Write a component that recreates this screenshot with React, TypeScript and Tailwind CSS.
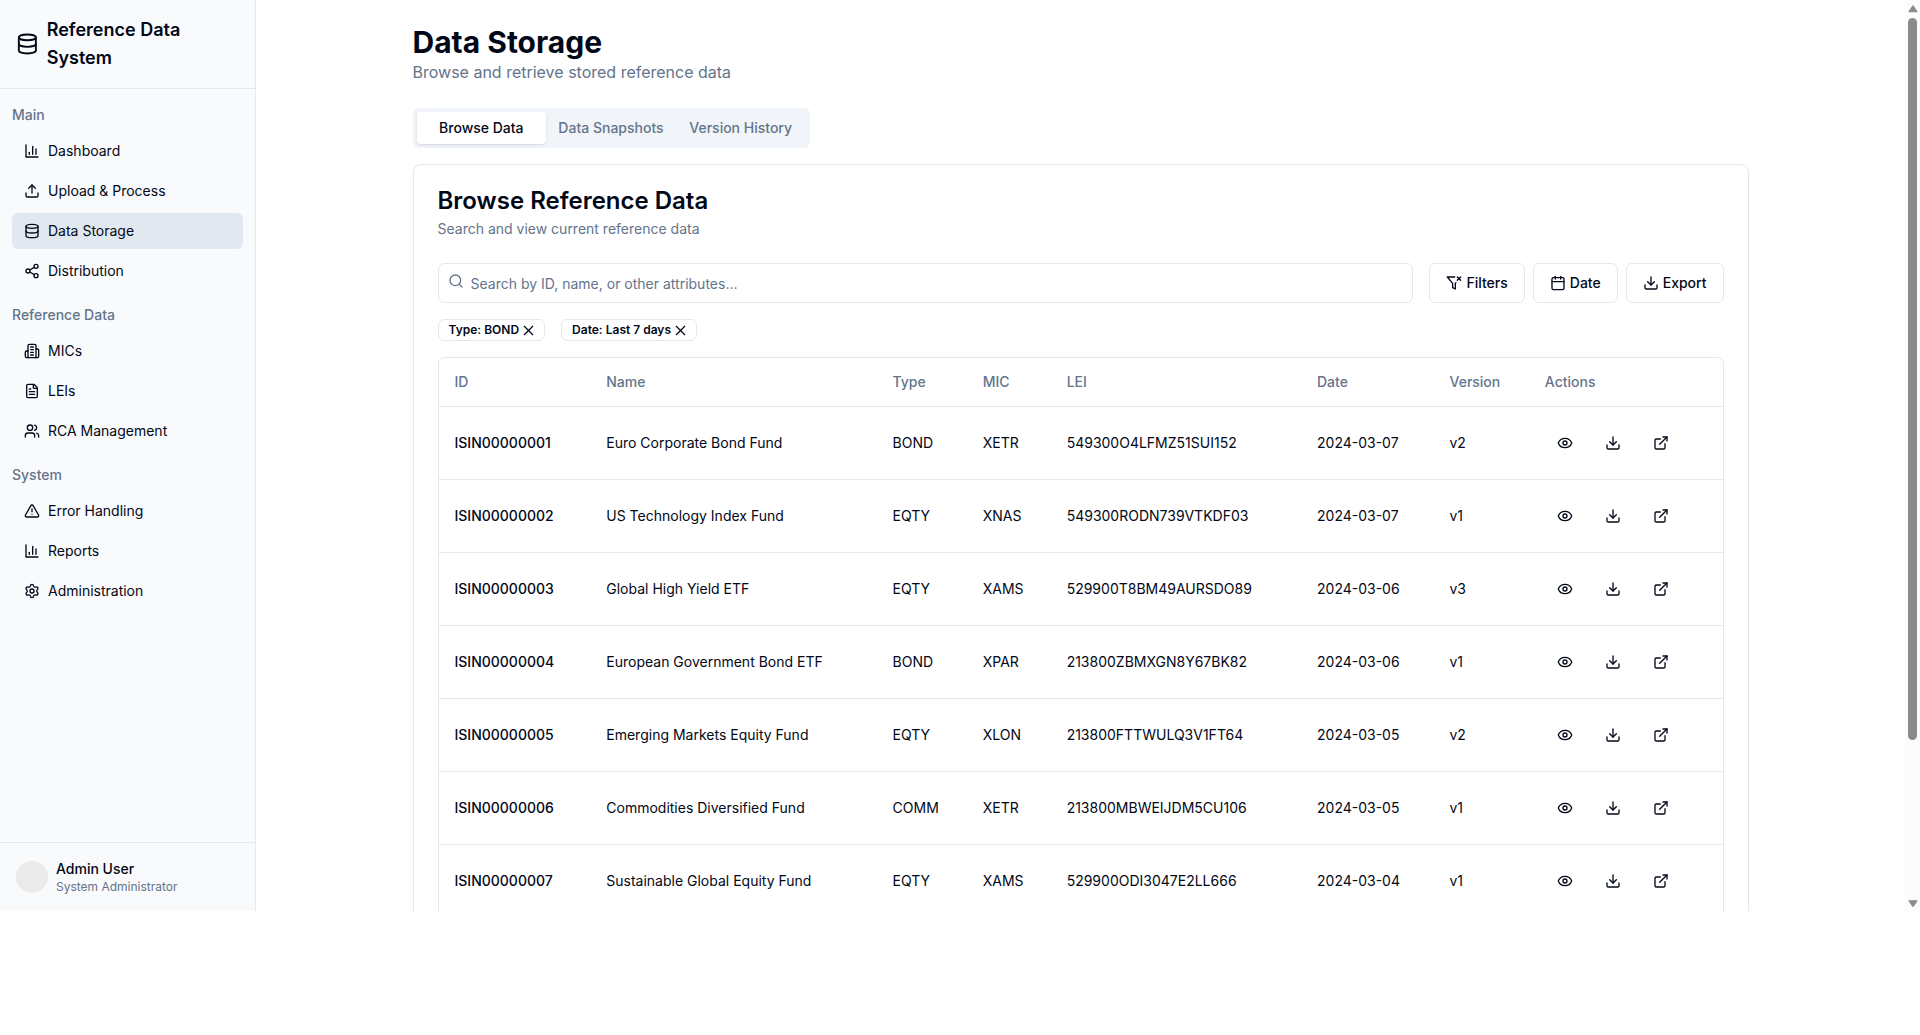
import { useState } from "react";
import type { ComponentType } from "react";
import {
  Calendar,
  Database,
  Download,
  ExternalLink,
  Eye,
  FileText,
  Settings,
  Share2,
  TriangleAlert,
  Upload,
  Users,
} from "lucide-react";

type IconType = ComponentType<{ className?: string }>;

function BarChartIcon({ className }: { className?: string }) {
  return (
    <svg viewBox="0 0 24 24" fill="none" stroke="currentColor" strokeWidth="2" strokeLinecap="round" strokeLinejoin="round" className={className} aria-hidden="true">
      <path d="M3 3v18h18" />
      <path d="M13 17V5" />
      <path d="M18 17V9" />
      <path d="M8 17v-3" />
    </svg>
  );
}

function BuildingIcon({ className }: { className?: string }) {
  return (
    <svg viewBox="0 0 24 24" fill="none" stroke="currentColor" strokeWidth="2" strokeLinecap="round" strokeLinejoin="round" className={className} aria-hidden="true">
      <path d="M6 22V4a2 2 0 0 1 2-2h8a2 2 0 0 1 2 2v18Z" />
      <path d="M6 12H4a2 2 0 0 0-2 2v6a2 2 0 0 0 2 2h2" />
      <path d="M18 9h2a2 2 0 0 1 2 2v9a2 2 0 0 1-2 2h-2" />
      <path d="M10 6h4M10 10h4M10 14h4M10 18h4" />
    </svg>
  );
}

function FilterXIcon({ className }: { className?: string }) {
  return (
    <svg viewBox="0 0 24 24" fill="none" stroke="currentColor" strokeWidth="2" strokeLinecap="round" strokeLinejoin="round" className={className} aria-hidden="true">
      <path d="M13.013 3H2l8 9.46V19l4 2v-8.54l.9-1.055" />
      <path d="m22 3-5 5" />
      <path d="m17 3 5 5" />
    </svg>
  );
}

function SearchIcon({ className }: { className?: string }) {
  return (
    <svg viewBox="0 0 24 24" fill="none" stroke="currentColor" strokeWidth="2" strokeLinecap="round" strokeLinejoin="round" className={className} aria-hidden="true">
      <circle cx="11" cy="11" r="8" />
      <path d="m21 21-4.3-4.3" />
    </svg>
  );
}

function CloseIcon({ className }: { className?: string }) {
  return (
    <svg viewBox="0 0 11 11" fill="none" stroke="currentColor" strokeWidth="1.3" className={className} aria-hidden="true">
      <path d="m1 1 9 9M10 1l-9 9" />
    </svg>
  );
}

const sections: { title: string; items: { label: string; icon: IconType }[] }[] = [
  {
    title: "Main",
    items: [
      { label: "Dashboard", icon: BarChartIcon },
      { label: "Upload & Process", icon: Upload },
      { label: "Data Storage", icon: Database },
      { label: "Distribution", icon: Share2 },
    ],
  },
  {
    title: "Reference Data",
    items: [
      { label: "MICs", icon: BuildingIcon },
      { label: "LEIs", icon: FileText },
      { label: "RCA Management", icon: Users },
    ],
  },
  {
    title: "System",
    items: [
      { label: "Error Handling", icon: TriangleAlert },
      { label: "Reports", icon: BarChartIcon },
      { label: "Administration", icon: Settings },
    ],
  },
];

const rows = [
  ["ISIN00000001", "Euro Corporate Bond Fund", "BOND", "XETR", "549300O4LFMZ51SUI152", "2024-03-07", "v2"],
  ["ISIN00000002", "US Technology Index Fund", "EQTY", "XNAS", "549300RODN739VTKDF03", "2024-03-07", "v1"],
  ["ISIN00000003", "Global High Yield ETF", "EQTY", "XAMS", "529900T8BM49AURSDO89", "2024-03-06", "v3"],
  ["ISIN00000004", "European Government Bond ETF", "BOND", "XPAR", "213800ZBMXGN8Y67BK82", "2024-03-06", "v1"],
  ["ISIN00000005", "Emerging Markets Equity Fund", "EQTY", "XLON", "213800FTTWULQ3V1FT64", "2024-03-05", "v2"],
  ["ISIN00000006", "Commodities Diversified Fund", "COMM", "XETR", "213800MBWEIJDM5CU106", "2024-03-05", "v1"],
  ["ISIN00000007", "Sustainable Global Equity Fund", "EQTY", "XAMS", "529900ODI3047E2LL666", "2024-03-04", "v1"],
];

const columns = ["ID", "Name", "Type", "MIC", "LEI", "Date", "Version", "Actions"];
const tabs = ["Browse Data", "Data Snapshots", "Version History"];

const rowActions: { label: string; icon: IconType }[] = [
  { label: "View", icon: Eye },
  { label: "Download", icon: Download },
  { label: "Open", icon: ExternalLink },
];

const toolbar: { label: string; icon: IconType }[] = [
  { label: "Filters", icon: FilterXIcon },
  { label: "Date", icon: Calendar },
  { label: "Export", icon: Download },
];

function Sidebar() {
  return (
    <aside className="flex w-64 shrink-0 flex-col border-r border-slate-200 bg-slate-50">
      <div className="flex items-center gap-2 border-b border-slate-200 p-4">
        <Database className="h-6 w-6" />
        <span className="text-lg/7 font-semibold">Reference Data System</span>
      </div>
      <nav className="flex flex-1 flex-col gap-4 px-3 py-4">
        {sections.map((section) => (
          <div key={section.title}>
            <h2 className="mb-2 text-sm/5 font-medium text-[#64748b]">{section.title}</h2>
            <ul className="flex flex-col gap-1">
              {section.items.map(({ label, icon: Icon }) => (
                <li key={label}>
                  <a
                    href="#"
                    className={
                      label === "Data Storage"
                        ? "flex items-center gap-2 rounded-md bg-slate-200 px-3 py-2 text-sm/5"
                        : "flex items-center gap-2 rounded-md px-3 py-2 text-sm/5 hover:bg-slate-100"
                    }
                  >
                    <Icon className="h-4 w-4" />
                    {label}
                  </a>
                </li>
              ))}
            </ul>
          </div>
        ))}
      </nav>
      <div className="flex items-center gap-2 border-t border-slate-200 p-4">
        <span className="flex h-8 w-8 items-center justify-center rounded-full bg-[#eaeaea]">
          <span className="h-2 w-2 rounded-full border border-[#f0f0f0]" />
        </span>
        <div>
          <p className="text-sm/5 font-medium">Admin User</p>
          <p className="text-xs/4 text-[#64748b]">System Administrator</p>
        </div>
      </div>
    </aside>
  );
}

function DataTable() {
  return (
    <div className="rounded-md border border-slate-200">
      <table className="w-full text-sm/5">
        <thead>
          <tr className="border-b border-slate-200">
            {columns.map((column) => (
              <th key={column} className="h-12 px-4 text-left align-middle font-medium text-[#64748b]">
                {column}
              </th>
            ))}
          </tr>
        </thead>
        <tbody>
          {rows.map((row) => (
            <tr key={row[0]} className="border-b border-slate-200">
              {row.map((cell, index) => (
                <td key={columns[index]} className={index === 0 ? "p-4 font-medium" : "p-4"}>
                  {cell}
                </td>
              ))}
              <td className="p-4">
                <div className="flex gap-2">
                  {rowActions.map(({ label, icon: Icon }) => (
                    <button
                      key={label}
                      type="button"
                      aria-label={`${label} ${row[0]}`}
                      className="flex h-10 w-10 items-center justify-center rounded-md hover:bg-slate-100"
                    >
                      <Icon className="h-4 w-4" />
                    </button>
                  ))}
                </div>
              </td>
            </tr>
          ))}
        </tbody>
      </table>
    </div>
  );
}

function ScrollRail() {
  return (
    <div aria-hidden="true" className="flex w-[15px] shrink-0 flex-col items-center bg-[#fcfcfc] pt-[5px] pb-[3px]">
      <svg viewBox="0 0 10 8" className="h-2 w-[10px] shrink-0" fill="#8b8b8b">
        <path d="M5 .5 9.2 6.8H.8Z" stroke="#8b8b8b" strokeLinejoin="round" />
      </svg>
      <div className="mt-[5px] h-[80%] w-[9px] rounded-full bg-[#8b8b8b]" />
      <svg viewBox="0 0 10 8" className="mt-auto h-2 w-[10px] shrink-0" fill="#8b8b8b">
        <path d="M5 6.8 9.2 .8H.8Z" stroke="#8b8b8b" strokeLinejoin="round" />
      </svg>
    </div>
  );
}

export default function App() {
  const [tab, setTab] = useState("Browse Data");
  const [query, setQuery] = useState("");
  const [chips, setChips] = useState(["Type: BOND", "Date: Last 7 days"]);

  return (
    <div className="flex h-[88vh] overflow-hidden bg-white font-['Inter',sans-serif] text-[#020817]">
      <Sidebar />
      <main className="min-w-0 flex-1 overflow-y-auto [scrollbar-width:none]">
        <div className="mx-auto max-w-[1400px] px-8 py-6">
          <h1 className="text-3xl/9 font-bold">Data Storage</h1>
          <p className="text-base/6 text-[#64748b]">Browse and retrieve stored reference data</p>

          <div role="tablist" className="mt-6 inline-grid h-10 min-w-[397px] grid-cols-3 rounded-md bg-slate-100 p-1 align-top">
            {tabs.map((name) => (
              <button
                key={name}
                type="button"
                role="tab"
                aria-selected={tab === name}
                onClick={() => setTab(name)}
                className={
                  tab === name
                    ? "rounded-sm bg-white px-3 text-sm/5 font-medium whitespace-nowrap shadow-sm"
                    : "rounded-sm px-3 text-sm/5 font-medium whitespace-nowrap text-[#64748b]"
                }
              >
                {name}
              </button>
            ))}
          </div>

          <section className="mt-4 rounded-lg border border-slate-200 p-6 shadow-xs">
            <h2 className="text-2xl/6 font-semibold">Browse Reference Data</h2>
            <p className="mt-1.5 text-sm/5 text-[#64748b]">Search and view current reference data</p>

            <div className="mt-6 flex gap-4">
              <div className="relative flex-1">
                <SearchIcon className="absolute top-2.5 left-2.5 h-4 w-4 text-[#64748b]" />
                <input
                  type="search"
                  aria-label="Search reference data"
                  placeholder="Search by ID, name, or other attributes..."
                  value={query}
                  onChange={(event) => setQuery(event.target.value)}
                  className="h-10 w-full rounded-md border border-slate-200 pr-3 pl-8 text-sm/5 placeholder:text-[#64748b]"
                />
              </div>
              <div className="flex gap-2">
                {toolbar.map(({ label, icon: Icon }) => (
                  <button
                    key={label}
                    type="button"
                    className="flex h-10 items-center gap-1 rounded-md border border-slate-200 px-4 text-sm/5 font-medium"
                  >
                    <Icon className="h-4 w-4" />
                    {label}
                  </button>
                ))}
              </div>
            </div>

            <div className="my-4 flex gap-4">
              {chips.map((chip) => (
                <span
                  key={chip}
                  className="flex items-center gap-1 rounded-md border border-slate-200 px-2.5 py-0.5 text-xs/4 font-semibold"
                >
                  {chip}
                  <button
                    type="button"
                    aria-label={`Remove ${chip}`}
                    onClick={() => setChips(chips.filter((other) => other !== chip))}
                  >
                    <CloseIcon className="h-[11px] w-[11px]" />
                  </button>
                </span>
              ))}
            </div>

            <DataTable />
          </section>
        </div>
      </main>
      <ScrollRail />
    </div>
  );
}
